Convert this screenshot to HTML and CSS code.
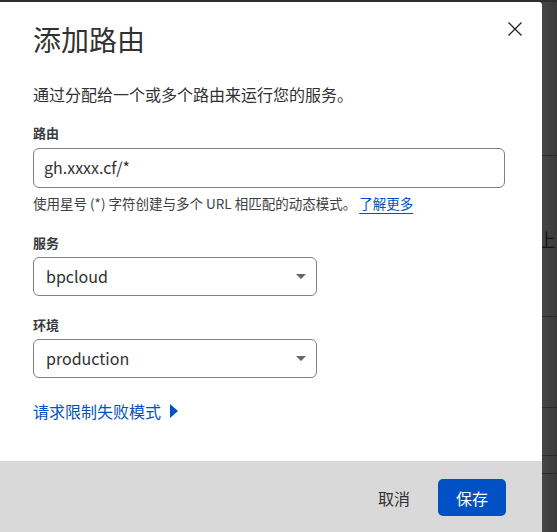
FILE: index.html
```html
<!DOCTYPE html>
<html lang="zh-CN">
<head>
<meta charset="utf-8">
<title>添加路由</title>
<link rel="stylesheet" href="styles.css">
</head>
<body>
<div class="dialog">
  <button class="close" aria-label="关闭">
    <svg width="14" height="14" viewBox="0 0 14 14"><path d="M0.5 0.5L13.5 13.5M13.5 0.5L0.5 13.5" stroke="#222" stroke-width="1.3" fill="none"/></svg>
  </button>
  <div class="dialog-body">
    <h1 class="title">添加路由</h1>
    <p class="desc">通过分配给一个或多个路由来运行您的服务。</p>

    <div class="field">
      <label class="label">路由</label>
      <div class="input">gh.xxxx.cf/*</div>
      <p class="help">使用星号 (*) 字符创建与多个 URL 相匹配的动态模式。 <a class="help-link">了解更多</a></p>
    </div>

    <div class="field field-svc">
      <label class="label">服务</label>
      <div class="select"><span>bpcloud</span><svg class="caret" width="10" height="5" viewBox="0 0 10 5"><path d="M0 0H10L5.6 4.6Q5 5.2 4.4 4.6Z" fill="#666"/></svg></div>
    </div>

    <div class="field field-env">
      <label class="label">环境</label>
      <div class="select"><span>production</span><svg class="caret" width="10" height="5" viewBox="0 0 10 5"><path d="M0 0H10L5.6 4.6Q5 5.2 4.4 4.6Z" fill="#666"/></svg></div>
    </div>

    <a class="toggle">请求限制失败模式 <svg width="8" height="14" viewBox="0 0 8 14"><path d="M0 0L8 7L0 14Z" fill="#0051c3"/></svg></a>
  </div>
  <div class="footer">
    <button class="btn-cancel">取消</button>
    <button class="btn-save">保存</button>
  </div>
</div>
<div class="bg">
  <div class="bg-row r1"></div>
  <div class="bg-row r2"><span class="bg-text">上</span></div>
  <div class="bg-row r3"></div>
  <div class="bg-row r4"></div>
  <div class="bg-row r5"></div>
</div>
</body>
</html>
```

FILE: styles.css
```css
* { box-sizing: border-box; }
html, body { margin: 0; padding: 0; }
body {
  width: 557px;
  height: 532px;
  overflow: hidden;
  padding-top: 2px;
  background: #2e2e2e;
  display: flex;
  font-family: "Noto Sans CJK SC", sans-serif;
  color: #313131;
}
.dialog {
  width: 542px;
  flex: none;
  background: #fff;
  border-top-right-radius: 3px;
  display: flex;
  flex-direction: column;
  position: relative;
}
.close {
  position: absolute;
  top: 20px;
  right: 20px;
  width: 14px;
  height: 14px;
  padding: 0;
  border: 0;
  background: none;
  display: block;
}
.close svg { display: block; }
.dialog-body {
  flex: 1;
  padding: 19px 37px 0 33px;
}
.title {
  margin: 0;
  font-size: 28px;
  line-height: 36px;
  font-weight: 400;
  color: #313131;
}
.desc {
  margin: 25px 0 0;
  font-size: 16px;
  line-height: 24px;
}
.field { margin-top: 18px; }
.field-svc { margin-top: 22px; }
.field-env { margin-top: 20px; }
.label {
  display: block;
  font-size: 13px;
  line-height: 18px;
  font-weight: 700;
  color: #3a3a3a;
}
.input {
  margin-top: 6px;
  height: 40px;
  border: 1px solid #808080;
  border-radius: 6px;
  padding: 0 10px 1px;
  font-size: 16px;
  line-height: 37px;
  color: #313131;
}
.help {
  margin: 6px 0 0;
  font-size: 13.5px;
  line-height: 18px;
  color: #404040;
}
.help-link {
  color: #0051c3;
  text-decoration: underline;
  text-underline-offset: 4px;
  text-decoration-thickness: 1px;
}
.select {
  margin-top: 5px;
  width: 284px;
  height: 39px;
  border: 1px solid #808080;
  border-radius: 6px;
  padding: 0 10px 2px 12px;
  display: flex;
  align-items: center;
  justify-content: space-between;
  font-size: 16px;
  color: #313131;
}
.caret { display: block; margin-top: 1px; }
.toggle {
  margin-top: 21px;
  display: flex;
  align-items: center;
  gap: 9px;
  font-size: 16px;
  line-height: 24px;
  color: #0051c3;
}
.toggle svg { display: block; }
.footer {
  background: #d9d9d9;
  padding: 18px 36px 16px;
  display: flex;
  justify-content: flex-end;
  align-items: center;
}
.btn-cancel {
  border: 0;
  background: none;
  font-family: inherit;
  font-size: 16px;
  color: #313131;
  padding: 0 16px;
  margin-right: 12px;
  height: 37px;
}
.btn-save {
  border: 0;
  background: #0051c3;
  color: #fff;
  font-family: inherit;
  font-size: 16px;
  height: 37px;
  padding: 0 18px;
  border-radius: 5px;
}
.bg {
  flex: 1;
  overflow: hidden;
  background: linear-gradient(to right, #464646, #3a3a3a);
}
.bg-row { border-bottom: 1px solid #2c2c2c; }
.r1 { height: 154px; }
.r2 { height: 161px; padding-top: 74px; }
.r3 { height: 91px; }
.r4 { height: 48px; }
.r5 { height: 18px; }
.bg-text {
  display: block;
  margin-left: -4px;
  font-size: 18px;
  line-height: 18px;
  color: #151515;
}
```
